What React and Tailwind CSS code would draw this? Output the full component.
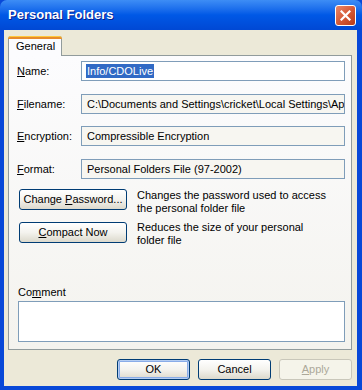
export default function App() {
    const font = { fontFamily: '"Liberation Sans", Arial, sans-serif' };

    const fieldRow = (accessKey, rest, value, editable, mt) => (
        <div className={`flex items-center ${mt}`}>
            <div className="w-[64px] text-[11px] text-black">
                <span className="underline">{accessKey}</span>{rest}
            </div>
            <div
                className={`flex-1 h-[20px] border border-[#7F9DB9] flex items-center px-[4px] text-[11px] text-black whitespace-nowrap overflow-hidden ${
                    editable ? 'bg-white' : 'bg-[#F7F6F1]'
                }`}
            >
                {editable ? (
                    <span className="bg-[#316AC5] text-white px-[1px] leading-[14px]">{value}</span>
                ) : (
                    <span className="pl-[1px]">{value}</span>
                )}
            </div>
        </div>
    );

    const xpButton = 'h-[21px] rounded-[3px] border border-[#003C74] bg-gradient-to-b from-white via-[#F4F3EE] to-[#DCD9CC] text-[11px] text-black flex items-center justify-center shrink-0';

    return (
        <div className="w-[362px] h-[390px] flex flex-col bg-[#0848D8] overflow-hidden" style={font}>
            {/* Title bar */}
            <div className="h-[30px] shrink-0 flex items-center justify-between pl-[8px] pr-[6px] bg-gradient-to-b from-[#3D8DF5] via-[#0058E6] to-[#0048D4] rounded-t-[7px]">
                <span className="text-white font-bold text-[13px]" style={{ textShadow: '1px 1px 0 #0A1E8C' }}>
                    Personal Folders
                </span>
                <div className="w-[21px] h-[21px] rounded-[3px] border border-white bg-gradient-to-br from-[#E8876A] via-[#D65A37] to-[#B83A14] flex items-center justify-center">
                    <svg width="11" height="11" viewBox="0 0 11 11">
                        <path d="M1.5 1.5 L9.5 9.5 M9.5 1.5 L1.5 9.5" stroke="white" strokeWidth="2.2" strokeLinecap="square" />
                    </svg>
                </div>
            </div>

            {/* Body */}
            <div className="flex-1 ml-[4px] mr-[5px] mb-[4px] bg-[#ECE9D8] flex flex-col pl-[4px] pr-[5px] pt-[6px]">
                {/* Tab */}
                <div className="flex">
                    <div className="relative z-10 w-[54px] h-[20px] -mb-[1px] bg-[#FCFCFE] border border-b-0 border-[#919B9C] rounded-t-[3px] flex items-center pl-[7px] text-[11px] text-black">
                        <div className="absolute -top-[1px] -left-[1px] -right-[1px] h-[3px] rounded-t-[3px] bg-[#E68B2C] border-t border-[#FFC83C]" />
                        General
                    </div>
                </div>

                {/* Panel */}
                <div className="h-[295px] shrink-0 border border-[#919B9C] bg-gradient-to-b from-[#FCFCFE] to-[#F4F3EE] pl-[8px] pr-[6px] pt-[5px] flex flex-col">
                    {fieldRow('N', 'ame:', 'Info/CDOLive', true, '')}
                    {fieldRow('F', 'ilename:', 'C:\\Documents and Settings\\cricket\\Local Settings\\Ap', false, 'mt-[13px]')}
                    {fieldRow('E', 'ncryption:', 'Compressible Encryption', false, 'mt-[12px]')}
                    {fieldRow('F', 'ormat:', 'Personal Folders File (97-2002)', false, 'mt-[13px]')}

                    <div className="flex items-start mt-[10px] ml-[2px]">
                        <button className={`${xpButton} w-[108px]`}>
                            Change&nbsp;<span className="underline">P</span>assword...
                        </button>
                        <div className="ml-[10px] text-[11px] leading-[13px] text-black">
                            Changes the password used to access
                            <br />
                            the personal folder file
                        </div>
                    </div>
                    <div className="flex items-start mt-[6px] ml-[2px]">
                        <button className={`${xpButton} w-[108px] mt-[1px]`}>
                            <span className="underline">C</span>ompact Now
                        </button>
                        <div className="ml-[10px] text-[11px] leading-[13px] text-black">
                            Reduces the size of your personal
                            <br />
                            folder file
                        </div>
                    </div>

                    <div className="mt-[39px] ml-[1px] text-[11px] leading-[13px] text-black">
                        Co<span className="underline">m</span>ment
                    </div>
                    <div className="mt-[2px] ml-[1px] h-[41px] bg-white border border-[#7F9DB9]" />
                </div>

                {/* Dialog buttons */}
                <div className="flex justify-end gap-[8px] mt-[9px]">
                    <button className="w-[73px] h-[21px] rounded-[3px] border border-[#003C74] bg-gradient-to-b from-white via-[#F4F3EE] to-[#DCD9CC] text-[11px] text-black flex items-center justify-center shadow-[inset_0_0_0_1px_#B4CDF2,inset_0_0_0_2px_#89ACE8]">
                        OK
                    </button>
                    <button className={`${xpButton} w-[73px]`}>Cancel</button>
                    <button className="w-[73px] h-[21px] rounded-[3px] border border-[#C9C7BA] bg-[#F5F4EA] text-[11px] text-[#ACA899] flex items-center justify-center">
                        <span className="underline">A</span>pply
                    </button>
                </div>
            </div>
        </div>
    );
}
